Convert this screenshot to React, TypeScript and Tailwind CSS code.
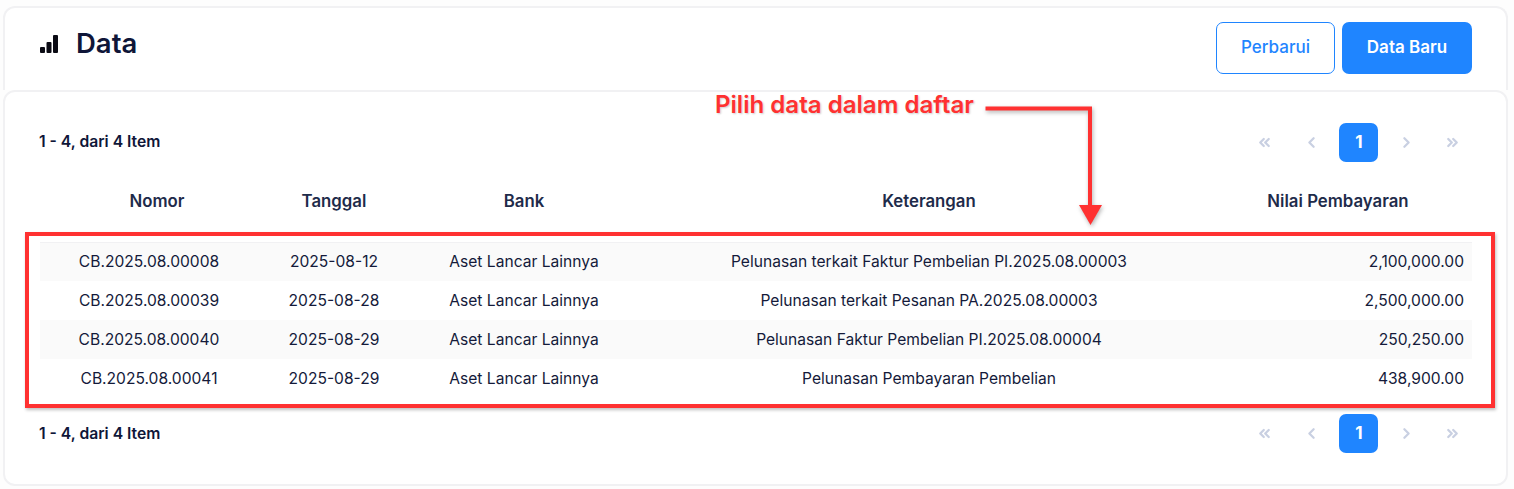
import { ChevronLeft, ChevronRight, ChevronsLeft, ChevronsRight } from "lucide-react";

const rows = [
  ["CB.2025.08.00008", "2025-08-12", "Aset Lancar Lainnya", "Pelunasan terkait Faktur Pembelian PI.2025.08.00003", "2,100,000.00"],
  ["CB.2025.08.00039", "2025-08-28", "Aset Lancar Lainnya", "Pelunasan terkait Pesanan PA.2025.08.00003", "2,500,000.00"],
  ["CB.2025.08.00040", "2025-08-29", "Aset Lancar Lainnya", "Pelunasan Faktur Pembelian PI.2025.08.00004", "250,250.00"],
  ["CB.2025.08.00041", "2025-08-29", "Aset Lancar Lainnya", "Pelunasan Pembayaran Pembelian", "438,900.00"],
];

function Pager() {
  return (
    <div className="flex items-center pr-[2px] text-[#c9d0e2]">
      <span className="w-[47px] flex justify-center"><ChevronsLeft size={17} strokeWidth={3.2} /></span>
      <span className="w-[47px] mr-[4px] flex justify-center"><ChevronLeft size={17} strokeWidth={3.2} /></span>
      <span className="w-[39px] h-[39px] rounded-[7px] bg-[#1f85ff] pl-[1px] text-white text-[17px] font-bold flex items-center justify-center">1</span>
      <span className="w-[56px] flex justify-center"><ChevronRight size={17} strokeWidth={3.2} /></span>
      <span className="w-[36px] flex justify-center"><ChevronsRight size={17} strokeWidth={3.2} /></span>
    </div>
  );
}

function Summary() {
  return (
    <div className="text-[15.7px] font-semibold text-[#0f1638]">1 - 4, dari 4 Item</div>
  );
}

export default function App() {
  return (
    <div className="relative w-[1514px] h-[489px] overflow-hidden bg-[#fdfdfd] font-['Inter',sans-serif] pt-[6px] px-[3px]">
      {/* header */}
      <header className="h-[84px] w-[1505px] bg-white rounded-t-[12px] border-2 border-b-0 border-[#f1f1f3] flex justify-between pt-[14px] pl-[34px] pr-[34px]">
        <div className="flex items-start gap-[17px]">
          <svg className="mt-[13px]" width="20" height="18" viewBox="0 0 20 18" aria-hidden="true">
            <rect x="1" y="12" width="5" height="6" rx="1" fill="#0b0b14" />
            <rect x="7.500" y="7" width="5" height="11" rx="1" fill="#0b0b14" />
            <rect x="14" y="0" width="5" height="18" rx="1" fill="#0b0b14" />
          </svg>
          <h1 className="text-[27.5px] leading-[43px] font-semibold text-[#0f1638]">Data</h1>
        </div>
        <div className="flex gap-[7px]">
          <button className="w-[119px] h-[52px] rounded-[7px] border border-[#1f85ff] bg-white text-[#1f85ff] text-[17px] font-medium">Perbarui</button>
          <button className="w-[130px] h-[52px] rounded-[7px] bg-[#1f85ff] text-white text-[17px] font-semibold">Data Baru</button>
        </div>
      </header>

      {/* body */}
      <section className="h-[396px] w-[1505px] bg-white rounded-[12px] border-2 border-[#f1f1f3] pt-[31px] pl-[34px] pr-[34px]">
        <div className="h-[39px] flex items-center justify-between">
          <div className="pb-[2px]"><Summary /></div>
          <Pager />
        </div>

        <table className="w-[1432px] mt-[8px] ml-[1px] table-fixed border-collapse text-[15.6px] text-[#141a3a]">
          <colgroup>
            <col className="w-[234px]" />
            <col className="w-[120px]" />
            <col className="w-[260px]" />
            <col className="w-[550px]" />
            <col className="w-[268px]" />
          </colgroup>
          <thead>
            <tr className="h-[72px] border-b border-[#f1f1f3] text-[#1e2b4a]">
              <th className="font-semibold text-[16.8px] pb-[8px]">Nomor</th>
              <th className="font-semibold text-[16.8px] pb-[8px]">Tanggal</th>
              <th className="font-semibold text-[16.8px] pb-[8px]">Bank</th>
              <th className="font-semibold text-[16.8px] pb-[8px]">Keterangan</th>
              <th className="font-semibold text-[16.8px] pb-[8px]">Nilai Pembayaran</th>
            </tr>
          </thead>
          <tbody>
            {rows.map((r, i) => (
              <tr key={r[0]} className={i % 2 === 0 ? "h-[39px] bg-[#fafafa]" : "h-[39px]"}>
                <td className="text-center pr-[16px]">{r[0]}</td>
                <td className="text-center">{r[1]}</td>
                <td className="text-center">{r[2]}</td>
                <td className="text-center">{r[3]}</td>
                <td className="text-right pr-[8px]">{r[4]}</td>
              </tr>
            ))}
          </tbody>
        </table>

        <div className="mt-[16px] h-[39px] flex items-center justify-between">
          <Summary />
          <Pager />
        </div>
      </section>

      {/* annotation overlay */}
      <div className="absolute left-[25px] top-[232px] w-[1470px] h-[176px] border-[4px] border-[#ff3131] shadow-[1px_2px_3px_rgba(0,0,0,0.25)]" />
      <div className="absolute left-[715px] top-[90px] text-[24.1px] leading-[30px] font-semibold text-[#ff3131] whitespace-nowrap [text-shadow:1px_1px_2px_rgba(0,0,0,0.2)]">
        Pilih data dalam daftar
      </div>
      <svg className="absolute left-[980px] top-[100px]" width="140" height="130" viewBox="0 0 140 130" aria-hidden="true" style={{ filter: "drop-shadow(1px 2px 2px rgba(0,0,0,0.3))" }}>
        <path d="M5.500 8.500 H110 V108" fill="none" stroke="#ff3131" strokeWidth="4" />
        <path d="M99 105 H122 L110.500 125 Z" fill="#ff3131" />
      </svg>
    </div>
  );
}
